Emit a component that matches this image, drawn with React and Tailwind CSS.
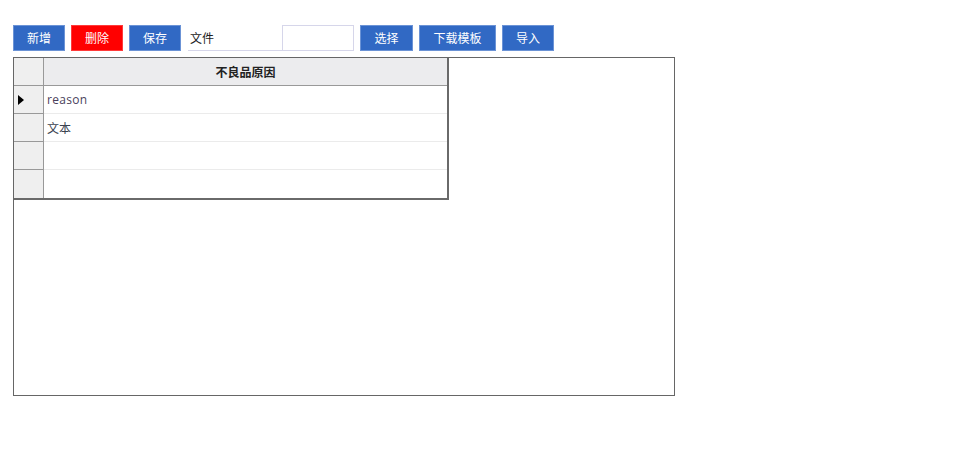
import React from 'react';

const font = { fontFamily: '"Noto Sans CJK SC", "Noto Sans", sans-serif' };

function Btn({ children, red, w = 'w-[52px]' }) {
  return (
    <button
      className={`${w} h-[26px] text-[12px] text-white flex items-center justify-center border ${
        red ? 'bg-[#ff0000] border-[#ff3a3a]' : 'bg-[#3169c4] border-[#6b93d6]'
      }`}
    >
      {children}
    </button>
  );
}

const rows = [
  { text: 'reason', current: true, color: 'text-[#4a3f5c] font-["Open_Sans",sans-serif] tracking-[0.3px]' },
  { text: '文本', color: 'text-[#3b4250]' },
  { text: '' },
  { text: '' },
];

export default function App() {
  return (
    <div className="w-[960px] h-[450px] bg-white pt-[25px] pl-[13px]" style={font}>
      <div className="flex items-start">
        <Btn>新增</Btn>
        <div className="ml-[6px]"><Btn red>删除</Btn></div>
        <div className="ml-[6px]"><Btn>保存</Btn></div>
        <div className="ml-[7px] w-[94px] h-[26px] border-b border-[#d6d6ea] text-[12px] text-[#222] flex items-center pl-[2px]">
          文件
        </div>
        <div className="w-[72px] h-[26px] border border-[#d6d6ea]"></div>
        <div className="ml-[6px]"><Btn w="w-[53px]">选择</Btn></div>
        <div className="ml-[6px]"><Btn w="w-[77px]">下载模板</Btn></div>
        <div className="ml-[6px]"><Btn>导入</Btn></div>
      </div>

      <div className="mt-[6px] w-[662px] h-[339px] border border-[#666]">
        <div className="w-[435px] border-r-2 border-b-2 border-[#6a6a6a]">
          <div className="flex h-[28px] border-b border-[#999]">
            <div className="w-[30px] bg-[#efefef] border-r border-[#999]"></div>
            <div className="flex-1 bg-[#ececee] flex items-center justify-center text-[12px] font-bold text-[#222]">
              不良品原因
            </div>
          </div>
          {rows.map((r, i) => (
            <div key={i} className="flex h-[28px]">
              <div
                className={`w-[30px] bg-[#efefef] border-r border-[#999] flex items-center pl-[4px] ${
                  i < rows.length - 1 ? 'border-b border-b-[#999]' : ''
                }`}
              >
                {r.current && (
                  <svg width="6" height="10" viewBox="0 0 6 10">
                    <path d="M0 0 L6 5 L0 10 Z" fill="#000" />
                  </svg>
                )}
              </div>
              <div
                className={`flex-1 flex items-center pl-[3px] text-[12px] ${r.color || ''} ${
                  i < rows.length - 1 ? 'border-b border-[#ebebeb]' : ''
                }`}
              >
                {r.text}
              </div>
            </div>
          ))}
        </div>
      </div>
    </div>
  );
}
